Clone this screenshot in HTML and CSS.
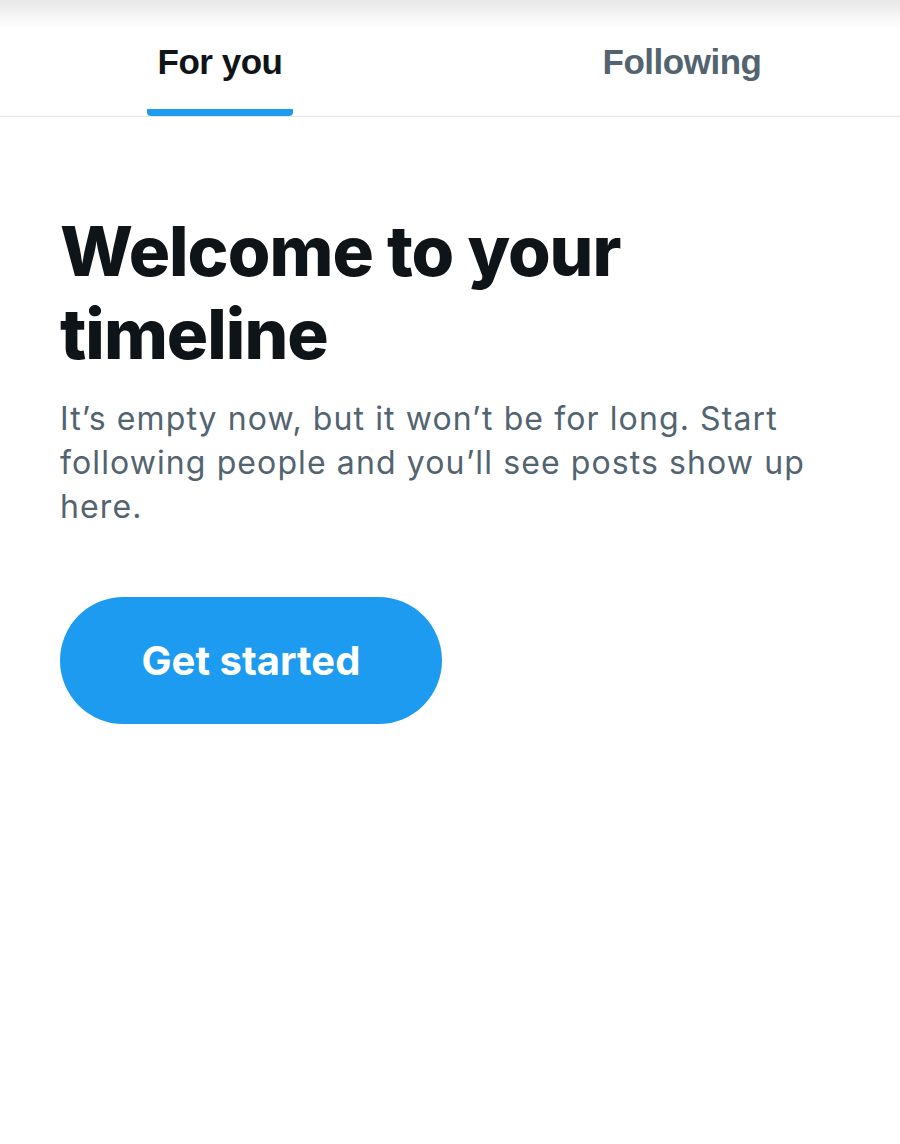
FILE: index.html
```html
<!DOCTYPE html>
<html lang="en">

<head>
    <meta charset="UTF-8">
    <title>Home</title>
    <link rel="stylesheet" href="styles.css">
</head>

<body>
    <div class="top-shade"></div>
    <nav class="tabs">
        <a class="tab active" href="#"><span class="tab-label">For you</span></a>
        <a class="tab" href="#"><span class="tab-label">Following</span></a>
    </nav>
    <main class="empty">
        <h1>Welcome to your timeline</h1>
        <p class="lead">It’s empty now, but it won’t be for long. Start following people and you’ll see posts show up here.</p>
        <button class="primary" type="button">Get started</button>
    </main>
</body>

</html>
```

FILE: styles.css
```css
body {
    font-family: Inter, "Liberation Sans", Arial, sans-serif;
    margin: 0;
    background-color: #fff;
    color: #0f1419;
}

.top-shade {
    height: 28px;
    background: linear-gradient(#e8e8e8, #fff);
}

.tabs {
    display: flex;
    height: 88px;
    border-bottom: 1px solid #e4e6e8;
}

.tab {
    flex: 1;
    display: flex;
    justify-content: center;
    text-decoration: none;
}

.tab-label {
    display: flex;
    align-items: flex-start;
    padding: 14px 12px 0;
    font-family: "Liberation Sans", Arial, sans-serif;
    font-size: 35px;
    font-weight: bold;
    letter-spacing: -0.5px;
    color: #536471;
    border-bottom: 7px solid transparent;
    border-radius: 1px;
}

.tab:first-child .tab-label {
    margin-right: 10px;
}

.tab:last-child .tab-label {
    margin-left: 14px;
}

.tab.active .tab-label {
    color: #0f1419;
    border-bottom-color: #1d9bf0;
    padding: 14px 11px 0;
    border-radius: 4px;
}

.empty {
    padding: 93px 60px 0;
}

h1 {
    margin: 0;
    font-size: 69px;
    font-weight: 800;
    line-height: 83px;
    letter-spacing: -1px;
    max-width: 640px;
}

.lead {
    margin: 21px 0 0;
    max-width: 760px;
    font-size: 32px;
    line-height: 44px;
    letter-spacing: 1.1px;
    color: #536471;
}

.primary {
    margin-top: 68px;
    width: 382px;
    height: 127px;
    border: none;
    border-radius: 64px;
    background-color: #1d9bf0;
    color: #fff;
    font-family: inherit;
    font-size: 40px;
    font-weight: bold;
    cursor: pointer;
}
```
